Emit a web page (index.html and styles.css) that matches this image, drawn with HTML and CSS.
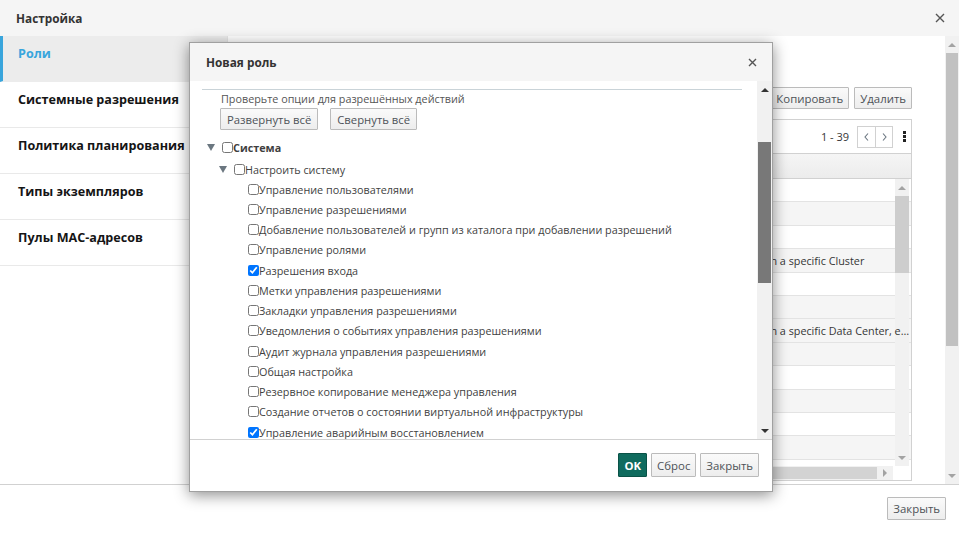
FILE: index.html
```html
<!DOCTYPE html>
<html lang="ru">
<head>
  <meta charset="UTF-8">
  <title>Настройка</title>
  <link rel="stylesheet" href="styles.css">
</head>
<body>

  <div class="page">
    <div class="top">
      <span class="top-title">Настройка</span>
      <svg class="x-icon" width="10" height="10" viewBox="0 0 10 10"><path d="M1 1L9 9M9 1L1 9" stroke="#555" stroke-width="1.4"/></svg>
    </div>

    <div class="main">
      <div class="side">
        <div class="side-item active">Роли</div>
        <div class="side-item">Системные разрешения</div>
        <div class="side-item">Политика планирования</div>
        <div class="side-item">Типы экземпляров</div>
        <div class="side-item">Пулы MAC-адресов</div>
      </div>

      <div class="content">
        <div class="actions">
          <button class="btn">Новая</button>
          <button class="btn">Изменить</button>
          <button class="btn">Копировать</button>
          <button class="btn">Удалить</button>
        </div>

        <div class="grid">
          <div class="grid-bar">
            <span class="count">1 - 39</span>
            <span class="pager">
              <span class="pg"><svg width="5" height="8" viewBox="0 0 5 8"><path d="M4 0.5L1 4L4 7.5" fill="none" stroke="#6a7680" stroke-width="1.1"/></svg></span>
              <span class="pg"><svg width="5" height="8" viewBox="0 0 5 8"><path d="M1 0.5L4 4L1 7.5" fill="none" stroke="#6a7680" stroke-width="1.1"/></svg></span>
            </span>
            <span class="kebab"></span>
          </div>
          <div class="grid-head">
            <span class="c-name">Имя</span>
            <span class="c-desc">Описание</span>
          </div>
          <div class="grid-body">
            <div class="rows">
              <div class="row"><span class="c-name">SuperUser</span><span class="c-desc">Roles management administrator</span></div>
              <div class="row"><span class="c-name">ClusterAdmin</span><span class="c-desc">Administrator Role</span></div>
              <div class="row"><span class="c-name">DataCenterAdmin</span><span class="c-desc">Administrator Role</span></div>
              <div class="row"><span class="c-name">ClusterAdmin</span><span class="c-desc">Administrator Role, permission for all the objects underneath a specific Cluster</span></div>
              <div class="row"><span class="c-name">UserRole</span><span class="c-desc">User Role</span></div>
              <div class="row"><span class="c-name">PowerUserRole</span><span class="c-desc">User Role</span></div>
              <div class="row"><span class="c-name">DataCenterAdmin</span><span class="c-desc over">Administrator Role, permission for all the objects underneath a specific Data Center, except Storage</span></div>
              <div class="row"><span class="c-name">StorageAdmin</span><span class="c-desc">Administrator Role</span></div>
              <div class="row"><span class="c-name">HostAdmin</span><span class="c-desc">Administrator Role</span></div>
              <div class="row"><span class="c-name">NetworkAdmin</span><span class="c-desc">Administrator Role</span></div>
              <div class="row"><span class="c-name">VmPoolAdmin</span><span class="c-desc">Administrator Role</span></div>
              <div class="row"><span class="c-name">TemplateAdmin</span><span class="c-desc">Administrator Role</span></div>
              <div class="row"><span class="c-name">TemplateOwner</span><span class="c-desc">Template Owner</span></div>
            </div>
            <div class="vscroll">
              <span class="arr"><i class="tri up light"></i></span>
              <span class="vtrack"><span class="vthumb"></span></span>
              <span class="arr"><i class="tri down light"></i></span>
            </div>
          </div>
          <div class="hscroll">
            <span class="hthumb"></span>
            <span class="harr"><i class="tri right light"></i></span>
            <span class="corner"></span>
          </div>
        </div>
      </div>

      <div class="pagescroll">
        <span class="arr"><i class="tri up light"></i></span>
        <span class="ptrack"><span class="pthumb"></span></span>
        <span class="arr"><i class="tri down light"></i></span>
      </div>
    </div>

    <div class="bottom">
      <button class="btn">Закрыть</button>
    </div>

    <div class="modal">
      <div class="modal-head">
        <span class="modal-title">Новая роль</span>
        <svg class="x-icon" width="9" height="9" viewBox="0 0 9 9"><path d="M1 1L8 8M8 1L1 8" stroke="#555" stroke-width="1.4"/></svg>
      </div>
      <div class="modal-body">
        <div class="tree-wrap">
          <div class="rule"></div>
          <div class="hint">Проверьте опции для разрешённых действий</div>
          <div class="tree-btns">
            <button class="btn">Развернуть всё</button>
            <button class="btn">Свернуть всё</button>
          </div>
          <div class="tree">
            <div class="node lvl1"><i class="caret"></i><input type="checkbox"><b>Система</b></div>
            <div class="node lvl2"><i class="caret"></i><input type="checkbox"><span>Настроить систему</span></div>
            <div class="node leaf"><input type="checkbox"><span>Управление пользователями</span></div>
            <div class="node leaf"><input type="checkbox"><span>Управление разрешениями</span></div>
            <div class="node leaf"><input type="checkbox"><span>Добавление пользователей и групп из каталога при добавлении разрешений</span></div>
            <div class="node leaf"><input type="checkbox"><span>Управление ролями</span></div>
            <div class="node leaf"><input type="checkbox" checked><span>Разрешения входа</span></div>
            <div class="node leaf"><input type="checkbox"><span>Метки управления разрешениями</span></div>
            <div class="node leaf"><input type="checkbox"><span>Закладки управления разрешениями</span></div>
            <div class="node leaf"><input type="checkbox"><span>Уведомления о событиях управления разрешениями</span></div>
            <div class="node leaf"><input type="checkbox"><span>Аудит журнала управления разрешениями</span></div>
            <div class="node leaf"><input type="checkbox"><span>Общая настройка</span></div>
            <div class="node leaf"><input type="checkbox"><span>Резервное копирование менеджера управления</span></div>
            <div class="node leaf"><input type="checkbox"><span>Создание отчетов о состоянии виртуальной инфраструктуры</span></div>
            <div class="node leaf"><input type="checkbox" checked><span>Управление аварийным восстановлением</span></div>
            <div class="node leaf"><input type="checkbox"><span>Управление квотами</span></div>
          </div>
        </div>
        <div class="mscroll">
          <span class="arr"><i class="tri up"></i></span>
          <span class="mtrack"><span class="mthumb"></span></span>
          <span class="arr"><i class="tri down"></i></span>
        </div>
      </div>
      <div class="modal-foot">
        <button class="btn ok">OK</button>
        <button class="btn">Сброс</button>
        <button class="btn">Закрыть</button>
      </div>
    </div>
  </div>

</body>
</html>
```

FILE: styles.css
```css
* { box-sizing: border-box; }
body {
  margin: 0;
  font-family: "Open Sans", "Liberation Sans", sans-serif;
  color: #363636;
  background: #fff;
}
.page {
  width: 959px;
  height: 533px;
  display: flex;
  flex-direction: column;
  position: relative;
  overflow: hidden;
}

/* outer dialog */
.top {
  height: 36px;
  flex: none;
  background: #f5f5f5;
  display: flex;
  align-items: center;
  justify-content: space-between;
  padding: 0 14px 0 16px;
}
.top-title { font-size: 11.8px; font-weight: 700; color: #333; }
.main { flex: 1; display: flex; min-height: 0; }
.side { width: 228px; flex: none; border-right: 1px solid #e6e6e6; }
.side-item {
  height: 46px;
  padding: 8px 0 0 18px;
  line-height: 20px;
  font-size: 12.6px;
  font-weight: 700;
  color: #151515;
  border-bottom: 1px solid #e9e9e9;
}
.side-item.active {
  background: #ececec;
  color: #39a5dc;
  border-left: 3px solid #39a5dc;
  padding-left: 15px;
  border-bottom-color: #ececec;
}
.content {
  flex: 1;
  display: flex;
  flex-direction: column;
  padding: 51px 33px 3px 14px;
  min-width: 0;
}
.actions { display: flex; justify-content: flex-end; gap: 5px; flex: none; }
.btn {
  font-family: "Open Sans", "Liberation Sans", sans-serif;
  font-size: 11.4px;
  color: #4d5258;
  height: 22px;
  padding: 0 5px;
  border: 1px solid #bbb;
  border-radius: 1px;
  background: linear-gradient(#fafafa, #ededed);
}
.grid {
  flex: 1;
  margin-top: 10px;
  border: 1px solid #d1d1d1;
  display: flex;
  flex-direction: column;
  min-height: 0;
}
.grid-bar {
  height: 34px;
  flex: none;
  display: flex;
  align-items: center;
  justify-content: flex-end;
  padding-right: 5px;
  border-bottom: 1px solid #d1d1d1;
  font-size: 11px;
}
.count { margin-right: 8px; color: #363636; }
.pager { display: flex; border: 1px solid #d1d1d1; height: 22px; margin-right: 10px; background: #fff; }
.pg { width: 17px; display: flex; align-items: center; justify-content: center; }
.pg + .pg { border-left: 1px solid #d1d1d1; }
.kebab {
  width: 3px;
  height: 3px;
  background: #222;
  margin-top: -8px;
  box-shadow: 0 4px 0 #222, 0 8px 0 #222;
}
.grid-head {
  height: 25px;
  flex: none;
  display: flex;
  align-items: center;
  background: linear-gradient(#f5f5f5, #ececec);
  border-bottom: 1px solid #d1d1d1;
  font-size: 11px;
  font-weight: 700;
}
.grid-body { flex: 1; position: relative; overflow: hidden; }
.row {
  height: 23.4px;
  display: flex;
  align-items: center;
  border-bottom: 1px solid #e3e3e3;
  font-size: 10.8px;
}
.row:nth-child(even) { background: #f5f5f5; }
.row:nth-child(7) { background: #f5f5f5; }
.c-name { width: 226px; flex: none; padding-left: 8px; }
.c-desc { flex: 1; white-space: nowrap; overflow: hidden; text-overflow: ellipsis; }
.c-desc.over { position: relative; z-index: 2; }
.vscroll {
  position: absolute;
  top: 0;
  bottom: 0;
  right: 2px;
  width: 14px;
  background: #f1f1f1;
  display: flex;
  flex-direction: column;
  z-index: 1;
}
.arr { height: 17px; flex: none; display: flex; align-items: center; justify-content: center; }
.vtrack { flex: 1; }
.vthumb { display: block; height: 77px; background: #cdcdcd; }
.hscroll { height: 14px; flex: none; display: flex; background: #f1f1f1; }
.hthumb { flex: 1; background: #d3d3d3; margin: 1px 0; }
.harr { width: 16px; display: flex; align-items: center; justify-content: center; }
.corner { width: 18px; background: #fff; }
.pagescroll { width: 14px; flex: none; background: #f1f1f1; display: flex; flex-direction: column; }
.ptrack { flex: 1; }
.pthumb { display: block; height: 293px; margin: 0 1px; background: #c1c1c1; }
.bottom {
  height: 49px;
  flex: none;
  border-top: 1px solid #d1d1d1;
  display: flex;
  justify-content: flex-end;
  padding: 12px 13px 0;
}
.bottom .btn { height: 23px; padding: 0 5px; }

/* scrollbar arrows */
.tri { width: 0; height: 0; display: block; }
.tri.up { border-left: 4px solid transparent; border-right: 4px solid transparent; border-bottom: 4px solid #333; }
.tri.down { border-left: 4px solid transparent; border-right: 4px solid transparent; border-top: 4px solid #333; }
.tri.right { border-top: 4px solid transparent; border-bottom: 4px solid transparent; border-left: 4px solid #333; }
.tri.up.light { border-bottom-color: #a3a3a3; }
.tri.down.light { border-top-color: #a3a3a3; }
.tri.right.light { border-left-color: #a3a3a3; }

/* modal */
.modal {
  position: absolute;
  z-index: 10;
  left: 189px;
  top: 42px;
  width: 584px;
  height: 450px;
  background: #fff;
  border: 1px solid #a0a0a0;
  box-shadow: 0 3px 14px rgba(0, 0, 0, 0.45);
  display: flex;
  flex-direction: column;
}
.modal-head {
  height: 38px;
  flex: none;
  background: #f5f5f5;
  display: flex;
  align-items: center;
  justify-content: space-between;
  padding: 0 15px 0 16px;
}
.modal-title { font-size: 11.8px; font-weight: 700; color: #333; }
.modal-body { flex: 1; display: flex; min-height: 0; }
.tree-wrap { flex: 1; overflow: hidden; padding: 8px 15px 0 12px; }
.rule { border-top: 1px solid #c9d3d8; }
.hint { font-size: 10.8px; line-height: 16px; color: #555; padding-left: 19px; margin-top: 1px; }
.tree-btns { display: flex; gap: 12px; padding-left: 18px; margin-top: 1px; }
.tree-btns .btn { font-size: 11.3px; padding: 0 6px; }
.tree { margin-top: 7px; font-size: 10.8px; color: #3f3f3f; }
.node { height: 20.25px; display: flex; align-items: center; white-space: nowrap; }
.node input { width: 11px; height: 11px; margin: 0; flex: none; }
.lvl1 { height: 20px; padding-left: 5px; }
.lvl2 { height: 20px; padding-left: 17px; margin-top: 2px; }
.leaf { padding-left: 46px; }
.caret {
  width: 0;
  height: 0;
  border-left: 4px solid transparent;
  border-right: 4px solid transparent;
  border-top: 7px solid #6b7780;
  margin-right: 7px;
}
.mscroll { width: 15px; flex: none; background: #f1f1f1; display: flex; flex-direction: column; }
.mtrack { flex: 1; }
.mthumb { display: block; height: 141px; margin: 44px 1px 0; background: #787878; }
.modal-foot {
  height: 52px;
  flex: none;
  border-top: 1px solid #d1d1d1;
  display: flex;
  justify-content: flex-end;
  gap: 4px;
  padding: 13px 13px 0;
}
.modal-foot .btn { height: 24px; padding: 0 5px; }
.btn.ok {
  background: #0f6b5e;
  border-color: #0a5247;
  color: #fff;
  font-weight: 700;
  padding: 0 5px;
}
```
